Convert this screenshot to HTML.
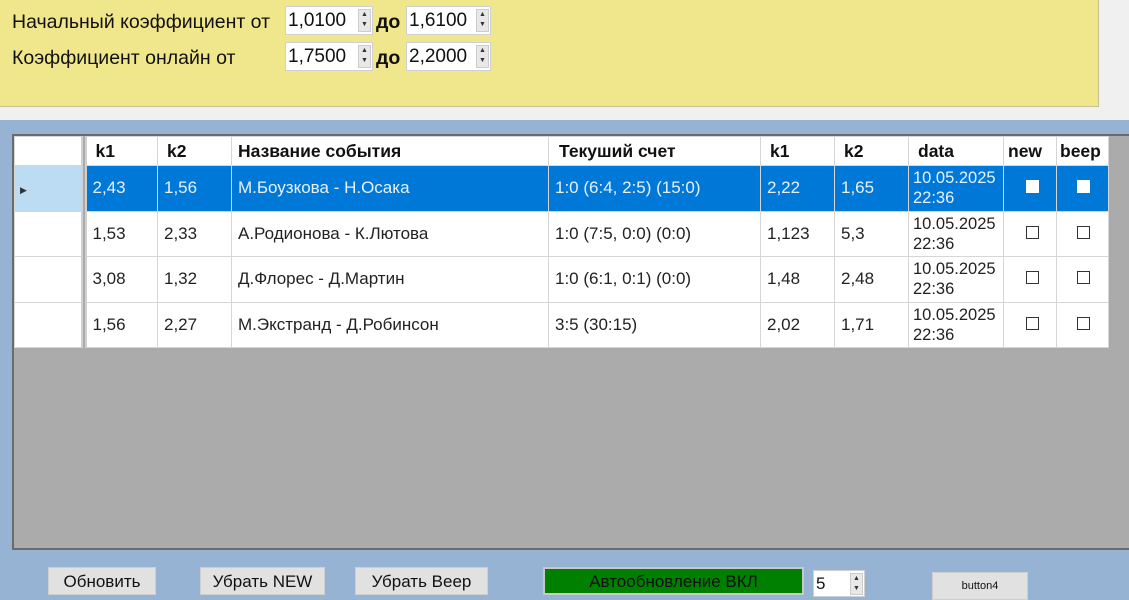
<!DOCTYPE html>
<html><head><meta charset="utf-8"><style>
*{margin:0;padding:0;box-sizing:border-box}
body{width:1129px;height:600px;overflow:hidden;background:#f0f0f0;font-family:"Liberation Sans","DejaVu Sans",sans-serif;position:relative}
.a{position:absolute}
#yel{left:0;top:0;width:1099px;height:107px;background:#f0e68c;border-right:1px solid #c8c090;border-bottom:1px solid #c8c090}
#blue{left:0;top:120px;width:1129px;height:480px;background:#97b3d3}
.lbl{font-size:19.5px;color:#111}
.num{background:#fff;border:1px solid #d0d0d0;height:29px;font-size:19px;padding:3px 0 0 2px;color:#111}
.spin{position:absolute;right:1px;top:2px;width:13px;height:23px;background:#e8e8e8;border:1px solid #ccc;font-size:7px;line-height:10px;text-align:center;color:#333}
#grid{left:12px;top:134px;width:1117px;height:416px;background:#ababab;border:2px solid #6b6b6b;border-right:none}
table{border-collapse:collapse;position:absolute;left:0;top:0;font-size:17px;color:#222;table-layout:fixed;width:1094px}
td{border:1px solid #d6d6d6;background:#fff;padding:0 0 0 6px;height:45.5px;vertical-align:middle;white-space:nowrap;overflow:hidden}
tr.h td{height:29px;font-weight:bold;background:#fff;color:#111;font-size:17.5px}
tr.s td{background:#0078d7;color:#e8f0ff}
tr.s td.rh{background:#bcdcf4}
td.rh{padding:0;border-right:6px double #d0d0d0}
.dt{font-size:16.5px;line-height:20px;padding-left:4px}
.cb{display:inline-block;width:13px;height:13px;border:1px solid #333;background:#fff;margin-left:12px}
tr.s .cb{border-color:#fff}
.btn{background:#e1e1e1;border:1px solid #cfcfcf;font-size:17px;text-align:center;color:#111}
</style></head><body>
<div id="yel" class="a"></div>
<div id="blue" class="a"></div>
<div class="a lbl" style="left:12px;top:11px">Начальный коэффициент от</div>
<div class="a lbl" style="left:12px;top:47px">Коэффициент онлайн от</div>
<div class="a num" style="left:285px;top:6px;width:88px">1,0100<div class="spin">▲<br>▼</div></div>
<div class="a lbl" style="left:376px;top:11px;font-weight:bold">до</div>
<div class="a num" style="left:406px;top:6px;width:85px">1,6100<div class="spin">▲<br>▼</div></div>
<div class="a num" style="left:285px;top:42px;width:88px">1,7500<div class="spin">▲<br>▼</div></div>
<div class="a lbl" style="left:376px;top:47px;font-weight:bold">до</div>
<div class="a num" style="left:406px;top:42px;width:85px">2,2000<div class="spin">▲<br>▼</div></div>

<div id="grid" class="a">
<table>
<colgroup><col style="width:69px"><col style="width:74px"><col style="width:74px"><col style="width:317px"><col style="width:212px"><col style="width:74px"><col style="width:74px"><col style="width:95px"><col style="width:53px"><col style="width:52px"></colgroup>
<tr class="h"><td class="rh"></td><td style="padding-left:9px">k1</td><td style="padding-left:9px">k2</td><td>Название события</td><td style="padding-left:10px">Текуший счет</td><td style="padding-left:9px">k1</td><td style="padding-left:9px">k2</td><td style="padding-left:9px">data</td><td style="padding-left:4px">new</td><td style="padding-left:3px">beep</td></tr>
<tr class="s"><td class="rh"><span style="font-size:9px;color:#333;margin-left:5px">▶</span></td><td>2,43</td><td>1,56</td><td>М.Боузкова - Н.Осака</td><td>1:0 (6:4, 2:5) (15:0)</td><td>2,22</td><td>1,65</td><td class="dt">10.05.2025<br>22:36</td><td><span class="cb" style="margin-left:16px"></span></td><td><span class="cb" style="margin-left:14px"></span></td></tr>
<tr><td class="rh"></td><td>1,53</td><td>2,33</td><td>А.Родионова - К.Лютова</td><td>1:0 (7:5, 0:0) (0:0)</td><td>1,123</td><td>5,3</td><td class="dt">10.05.2025<br>22:36</td><td><span class="cb" style="margin-left:16px"></span></td><td><span class="cb" style="margin-left:14px"></span></td></tr>
<tr><td class="rh"></td><td>3,08</td><td>1,32</td><td>Д.Флорес - Д.Мартин</td><td>1:0 (6:1, 0:1) (0:0)</td><td>1,48</td><td>2,48</td><td class="dt">10.05.2025<br>22:36</td><td><span class="cb" style="margin-left:16px"></span></td><td><span class="cb" style="margin-left:14px"></span></td></tr>
<tr><td class="rh"></td><td>1,56</td><td>2,27</td><td>М.Экстранд - Д.Робинсон</td><td>3:5 (30:15)</td><td>2,02</td><td>1,71</td><td class="dt">10.05.2025<br>22:36</td><td><span class="cb" style="margin-left:16px"></span></td><td><span class="cb" style="margin-left:14px"></span></td></tr>
</table>
</div>

<div class="a btn" style="left:48px;top:567px;width:108px;height:28px;padding-top:4px">Обновить</div>
<div class="a btn" style="left:200px;top:567px;width:125px;height:28px;padding-top:4px">Убрать NEW</div>
<div class="a btn" style="left:355px;top:567px;width:133px;height:28px;padding-top:4px">Убрать Beep</div>
<div class="a" style="left:543px;top:567px;width:261px;height:28px;background:#008000;border:2px solid #c8c8c8;font-size:17px;text-align:center;padding-top:3px;color:#111">Автообновление ВКЛ</div>
<div class="a num" style="left:813px;top:570px;width:52px;height:27px;font-size:17px;padding-top:3px">5<div class="spin" style="height:22px">▲<br>▼</div></div>
<div class="a btn" style="left:932px;top:572px;width:96px;height:28px;font-size:11px;padding-top:7px">button4</div>
</body></html>
